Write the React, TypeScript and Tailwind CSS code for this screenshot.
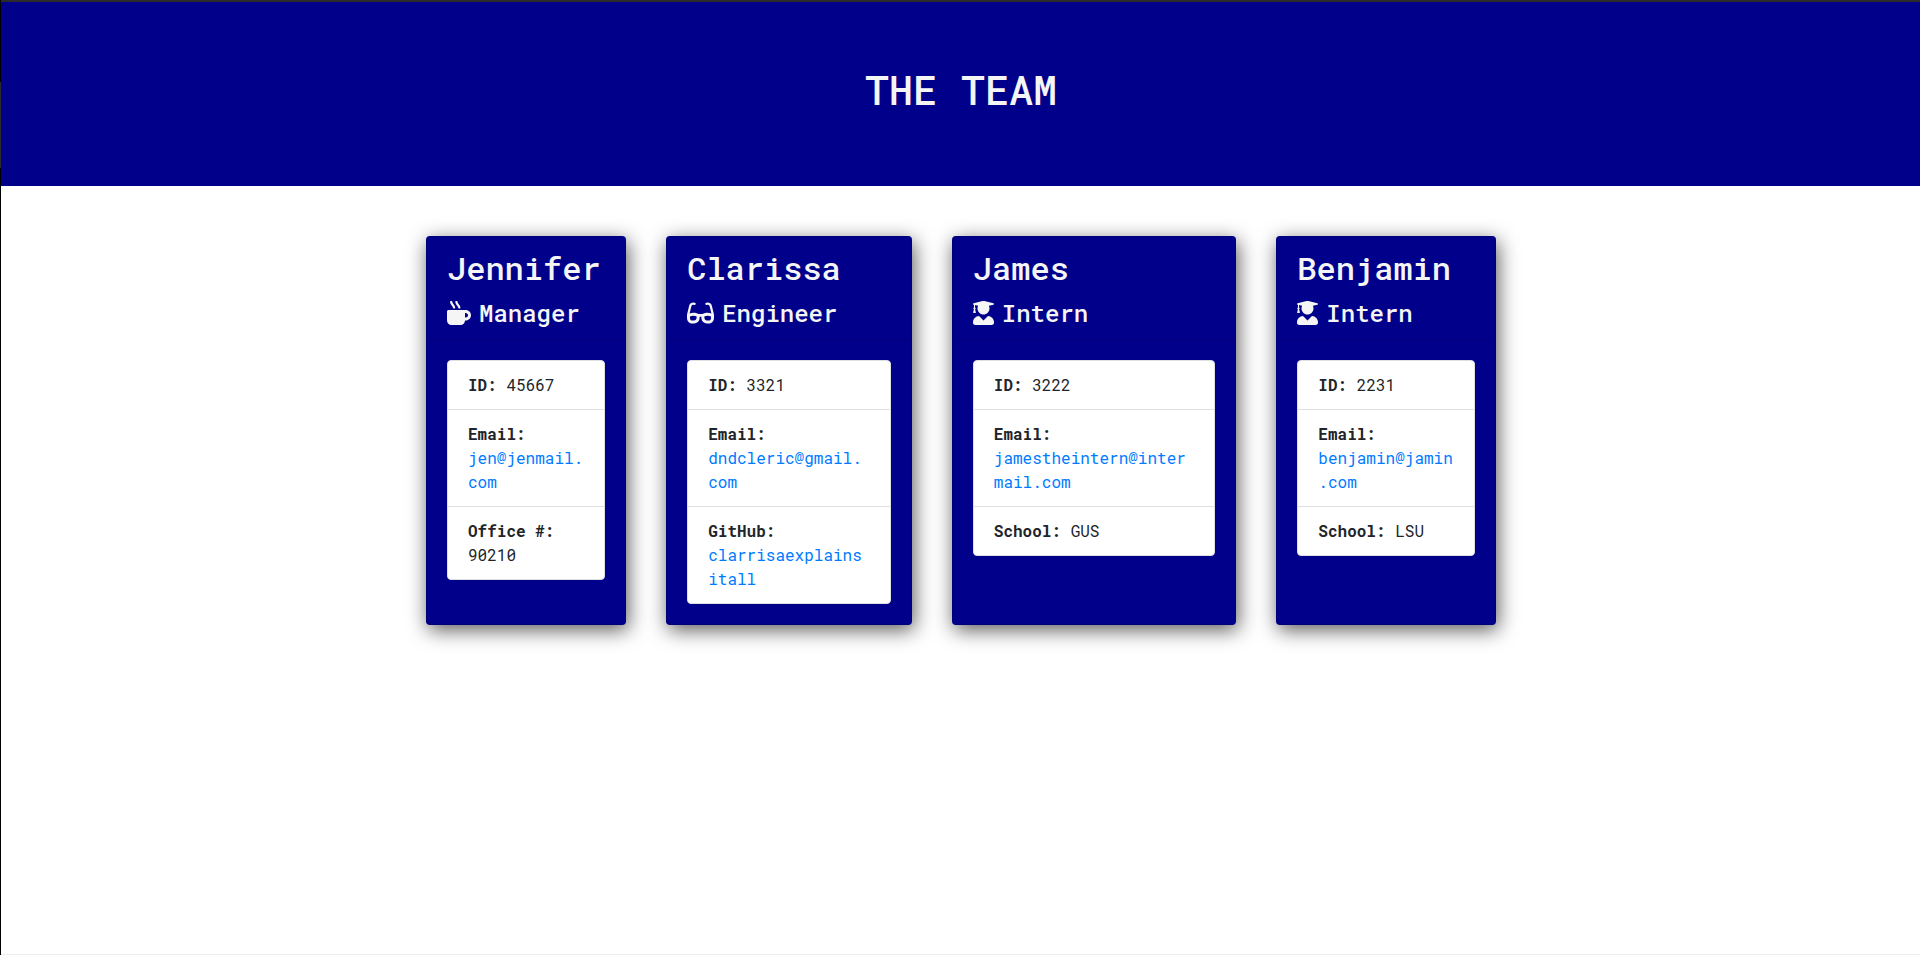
import type { ReactNode } from "react";
import { FaGlasses, FaMugHot, FaUserGraduate } from "react-icons/fa";

type Detail = { label: string; value: string; href?: string };
type Member = { name: string; role: string; icon: ReactNode; details: Detail[] };

const team: Member[] = [
  {
    name: "Jennifer",
    role: "Manager",
    icon: <FaMugHot className="h-6 w-6" aria-hidden="true" />,
    details: [
      { label: "ID:", value: "45667" },
      { label: "Email:", value: "jen@jenmail.com", href: "mailto:jen@jenmail.com" },
      { label: "Office #:", value: "90210" },
    ],
  },
  {
    name: "Clarissa",
    role: "Engineer",
    icon: <FaGlasses className="h-6 w-[27px]" aria-hidden="true" />,
    details: [
      { label: "ID:", value: "3321" },
      { label: "Email:", value: "dndcleric@gmail.com", href: "mailto:dndcleric@gmail.com" },
      { label: "GitHub:", value: "clarrisaexplainsitall", href: "https://github.com/clarrisaexplainsitall" },
    ],
  },
  {
    name: "James",
    role: "Intern",
    icon: <FaUserGraduate className="h-6 w-[21px]" aria-hidden="true" />,
    details: [
      { label: "ID:", value: "3222" },
      { label: "Email:", value: "jamestheintern@intermail.com", href: "mailto:jamestheintern@intermail.com" },
      { label: "School:", value: "GUS" },
    ],
  },
  {
    name: "Benjamin",
    role: "Intern",
    icon: <FaUserGraduate className="h-6 w-[21px]" aria-hidden="true" />,
    details: [
      { label: "ID:", value: "2231" },
      { label: "Email:", value: "benjamin@jamin.com", href: "mailto:benjamin@jamin.com" },
      { label: "School:", value: "LSU" },
    ],
  },
];

function MemberCard({ member }: { member: Member }) {
  return (
    <article className="m-5 min-w-0 rounded border border-black/10 bg-[#00008b] shadow-[2px_5px_20px_rgba(0,0,0,0.65)]">
      <header className="border-b border-black/10 px-5 pt-3 pb-2 text-[#f5f5f5]">
        <h2 className="mb-2.5 text-[32px] leading-[38px] font-medium">{member.name}</h2>
        <h3 className="mb-0.5 flex items-center gap-2 text-2xl leading-8 font-medium">
          {member.icon}
          {member.role}
        </h3>
      </header>
      <div className="p-5">
        <ul className="divide-y divide-[#dfdfdf] rounded border border-[#dfdfdf] bg-white">
          {member.details.map((detail) => (
            <li key={detail.label} className="px-5 py-3 wrap-break-word">
              <b>{detail.label}</b>{" "}
              {detail.href ? (
                <a href={detail.href} className="text-[#007bff] hover:underline">
                  {detail.value}
                </a>
              ) : (
                detail.value
              )}
            </li>
          ))}
        </ul>
      </div>
    </article>
  );
}

export default function App() {
  return (
    <div className="flex min-h-screen bg-white font-['Roboto_Mono','DejaVu_Sans_Mono',monospace] text-base leading-6 text-[#212529]">
      <div className="flex w-px shrink-0 flex-col bg-black pt-[82px]">
        <div className="h-[86px] bg-[#2b2b2b]" />
      </div>
      <div className="min-w-0 flex-1 border-t-2 border-b border-t-[#2b2b2b] border-b-[#eeeeee]">
        <header className="mb-[30px] bg-[#00008b] pt-16 pr-8 pb-[72px] pl-[33px] text-center text-[#f5f5f5]">
          <h1 className="text-[40px] leading-[48px] font-medium">THE TEAM</h1>
        </header>
        <div className="pl-px">
          <main className="mx-auto flex max-w-[1110px] flex-wrap justify-center lg:flex-nowrap">
            {team.map((member) => (
              <MemberCard key={member.name} member={member} />
            ))}
          </main>
        </div>
      </div>
    </div>
  );
}
